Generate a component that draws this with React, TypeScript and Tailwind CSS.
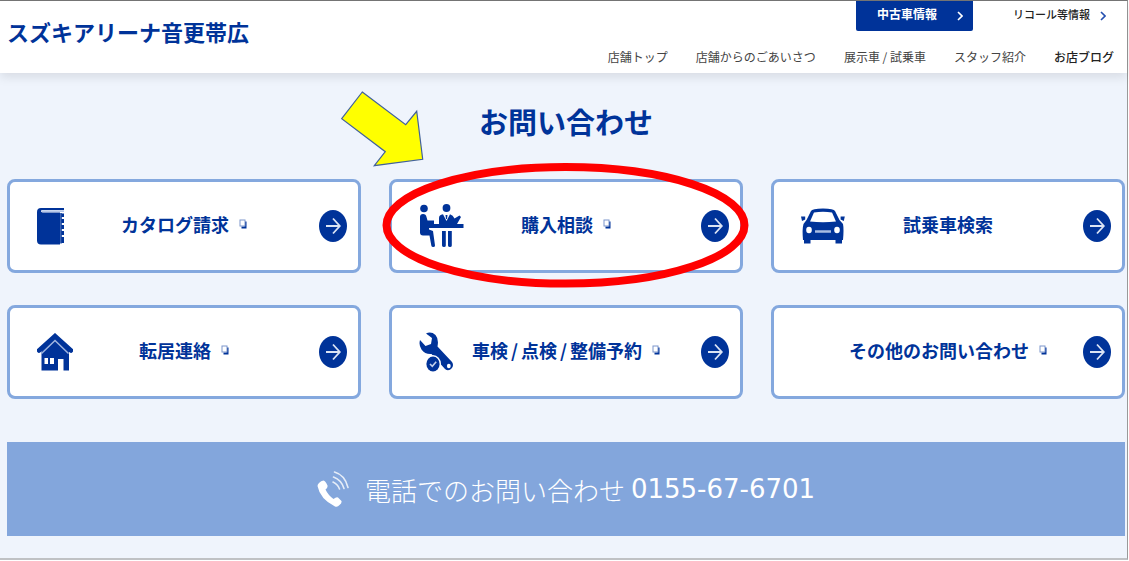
import type { ReactNode } from "react";

type Card = { label: ReactNode; icon?: ReactNode; external: boolean; marked?: boolean };

const BookIcon = () => (
  <svg width="28" height="37" viewBox="0 0 28 37" fill="currentColor" aria-hidden="true">
    <path d="M4 0H27V2H5.500Q4 2 4 3T5.500 4.500H23V36.500H4Q0 36.500 0 32.500V4Q0 0 4 0Z" />
    <path d="M5 2.300H27V4H5Z" fill="#b4c6e8" />
    <path d="M24.300 5.500H27V9H24.300ZM24.300 11H27V15H24.300ZM24.300 17H27V21H24.300ZM24.300 23H27V27H24.300ZM24.300 29H27V35H24.300Z" />
    <path d="M22.500 5H25V35.500H22.500Z" opacity=".75" />
  </svg>
);

const MeetingIcon = () => (
  <svg width="46" height="44" viewBox="0 0 46 44" fill="currentColor" aria-hidden="true">
    <circle cx="5" cy="4.500" r="3.800" />
    <circle cx="27.500" cy="4" r="3.900" />
    <path d="M1 13Q1 10 4 10Q7 10 7.500 13L8.500 16.500H15V20H44.500V24H10V25.500L14 27L16 41.500Q16 43 14.300 43Q12.500 43 12.300 41.500L10.500 31.500H4Q1 31.500 1 28.500Z" />
    <path d="M20 20V14Q20 11 24 10.300L27.500 17L31 10.300Q34 11 35.500 14.500L40.500 11.500L42 13L38 20Z" />
    <path d="M26.500 11H28.500L28 15H27Z" />
    <path d="M23 27H26.800V41.500Q26.800 43 25 43T23 41.500ZM29 27H32.800V41.500Q32.800 43 31 43T29 41.500Z" />
  </svg>
);

const CarIcon = () => (
  <svg width="44" height="36" viewBox="0 0 44 36" aria-hidden="true">
    <path
      fill="currentColor"
      d="M10 3Q11 .500 22 .500T34 3L38.500 12L42 16Q43 21 42 32H41V35.500H34.500V32H9.500V35.500H3V32H2Q1 21 2.500 16L5.500 12ZM0 8.500H4.200V11.500L1 13ZM43.800 8.500H39.600V11.500L42.800 13Z"
    />
    <path fill="white" d="M13 4.500Q22 3 31 4.500L35 13.500Q22 15 9 13.500Z" />
    <ellipse cx="8" cy="22" rx="2.800" ry="3.300" fill="white" />
    <ellipse cx="36" cy="22" rx="2.800" ry="3.300" fill="white" />
    <path d="M14 23.500H30" stroke="#a8bce2" strokeWidth="2.500" />
  </svg>
);

const HouseIcon = () => (
  <svg width="36" height="38" viewBox="0 0 36 38" aria-hidden="true">
    <path d="M18 3L4.500 18V37.500H32V18Z" fill="currentColor" />
    <path d="M2 17.500L18 3L34 17.500" fill="none" stroke="currentColor" strokeWidth="4.500" strokeLinejoin="miter" strokeLinecap="round" />
    <path d="M4.500 20.500L18 7.500L31.500 20.500" fill="none" stroke="#9fb5df" strokeWidth="1.500" />
    <path d="M7.500 25H11V31H7.500ZM13 25H17V31H13ZM21 26H26.500V38H21Z" fill="white" />
  </svg>
);

const WrenchIcon = () => (
  <svg width="35" height="40" viewBox="0 0 35 40" aria-hidden="true">
    <path
      fill="currentColor"
      d="M7 1.500Q12 -1 16.500 3Q20 7 18.500 14.500L33 30Q35 33 33 36Q29.500 40 26 37L12.500 22Q6 22.500 2.500 17.500Q-.500 13 1 8L6.500 14L12 12L13 6Z"
    />
    <ellipse cx="14" cy="32" rx="8" ry="9" fill="white" />
    <ellipse cx="14" cy="32" rx="6.600" ry="7.500" fill="currentColor" />
    <path d="M11 32L13.300 34.300L17.200 29.800" fill="none" stroke="#c3d1ec" strokeWidth="1.600" />
    <ellipse cx="29.800" cy="34" rx="1.900" ry="2.200" fill="white" />
  </svg>
);

const PhoneIcon = () => (
  <svg width="34" height="36" viewBox="0 0 34 36" aria-hidden="true">
    <path
      fill="white"
      d="M2 12Q4 9.500 6.500 9.500Q8.500 10 10.500 14.500Q11 16.500 8.500 18.500Q11 24 16.500 28Q19.500 25.500 21 26.500L24.500 30Q25 32 22.500 34Q20.500 36.500 18 35.500Q3 28 .500 15Q.500 13.500 2 12Z"
    />
    <g fill="none" stroke="white" strokeWidth="1.600" strokeLinecap="round" opacity=".8">
      <path d="M17.500 1Q28 4 31 16.500" />
      <path d="M16.500 6Q24.500 9 27 17.500" />
      <path d="M16 11Q21 13.500 22.500 18" />
    </g>
  </svg>
);

const CircleArrow = () => (
  <svg width="28" height="32" viewBox="0 0 28 32" aria-hidden="true">
    <ellipse cx="14" cy="16" rx="14" ry="16" fill="currentColor" />
    <path d="M7 16H20.500M14 8.500L20.800 16L14 23.500" fill="none" stroke="#dbe4f4" strokeWidth="1.800" />
  </svg>
);

const ExternalIcon = () => (
  <svg width="8" height="10" viewBox="0 0 8 10" aria-hidden="true">
    <path d="M2.500 7.500H5.500V2.500H7.500V9.500H2.500Z" fill="currentColor" />
    <rect x="1" y="1" width="5" height="6" fill="white" stroke="#7c96cb" />
  </svg>
);

const Chevron = () => (
  <svg width="6" height="10" viewBox="0 0 6 10" fill="none" stroke="currentColor" strokeWidth="1.600" aria-hidden="true">
    <path d="M1 1L5 5L1 9" />
  </svg>
);

const Slash = () => <span className="mx-[3px]">/</span>;

const cards: Card[] = [
  { label: "カタログ請求", icon: <BookIcon />, external: true },
  { label: "購入相談", icon: <MeetingIcon />, external: true, marked: true },
  { label: "試乗車検索", icon: <CarIcon />, external: false },
  { label: "転居連絡", icon: <HouseIcon />, external: true },
  { label: <>車検<Slash />点検<Slash />整備予約</>, icon: <WrenchIcon />, external: true },
  { label: "その他のお問い合わせ", external: true },
];

const navItems = ["店舗トップ", "店舗からのごあいさつ", "展示車 / 試乗車", "スタッフ紹介"];

const Marker = () => (
  <svg
    className="pointer-events-none absolute -top-[91px] -left-[52px] z-10 max-w-none"
    width="416"
    height="203"
    viewBox="0 0 416 203"
    aria-hidden="true"
  >
    <path
      d="M25.300 4L68.700 36.700L79.700 23.300L85.700 71.300L37.300 77.700L48.300 63.700L4.700 30.700Z"
      fill="#ffff00"
      stroke="#41619c"
      strokeWidth="1.200"
    />
    <ellipse cx="228.500" cy="137.300" rx="179" ry="58.300" fill="none" stroke="#ff0000" strokeWidth="8" />
  </svg>
);

export default function App() {
  return (
    <div className="bg-white pr-px font-['Noto_Sans_CJK_JP',sans-serif] text-[#003399]">
      <div className="border-t border-r border-b-2 border-t-[#777] border-r-[#999] border-b-[#bfc1c4] bg-[#eff4fc]">
        <header className="relative flex items-start justify-between bg-white pr-[13px] pb-2 pl-[7px] shadow-[0_4px_10px_rgba(0,0,0,0.1)]">
          <a href="#" className="mt-[14px] text-[22px] leading-8 font-bold">
            スズキアリーナ音更帯広
          </a>
          <div className="flex flex-col items-end">
            <div className="flex items-center gap-10 pr-2">
              <a
                href="#"
                className="flex h-[30px] items-center gap-5 rounded-b-xs bg-[#003399] pr-[10px] pl-[21px] text-[12px] font-bold text-white"
              >
                <span className="-mt-1">中古車情報</span>
                <Chevron />
              </a>
              <a href="#" className="flex items-center gap-[10px] text-[11px] font-medium text-[#222]">
                <span className="-mt-1">リコール等情報</span>
                <span className="text-[#2450b0]">
                  <Chevron />
                </span>
              </a>
            </div>
            <nav className="mt-[18px] flex gap-7 text-[12px] leading-4 text-[#444]">
              {navItems.map((item) => (
                <a key={item} href="#">
                  {item}
                </a>
              ))}
              <a href="#" className="font-medium text-[#222]">
                お店ブログ
              </a>
            </nav>
          </div>
        </header>

        <main className="pt-7 pr-[2px] pb-[22px] pl-[7px]">
          <h1 className="text-center text-[29px] leading-10 font-bold">お問い合わせ</h1>

          <ul className="mt-[38px] grid grid-cols-3 gap-x-7 gap-y-[32px]">
            {cards.map((card, index) => (
              <li key={index} className="relative">
                <a
                  href="#"
                  className="grid h-[94px] grid-cols-[1fr_auto_1fr] items-center rounded-lg border-3 border-[#84a8de] bg-white pr-[11px] pl-[27px]"
                >
                  <span>{card.icon}</span>
                  <span className="-mt-1 -ml-4 flex items-center gap-[10px] text-[18px] leading-6 font-bold">
                    <span>{card.label}</span>
                    {card.external && <ExternalIcon />}
                  </span>
                  <span className="justify-self-end">
                    <CircleArrow />
                  </span>
                </a>
                {card.marked && <Marker />}
              </li>
            ))}
          </ul>

          <a href="tel:0155676701" className="mt-[43px] flex h-[94px] items-center justify-center bg-[#83a6dc] text-white">
            <PhoneIcon />
            <span className="ml-[14px] text-[26px] font-light">電話でのお問い合わせ</span>
            <span className="ml-[6px] font-['DejaVu_Sans',sans-serif] text-[26px]">0155-67-6701</span>
          </a>
        </main>
      </div>
    </div>
  );
}
